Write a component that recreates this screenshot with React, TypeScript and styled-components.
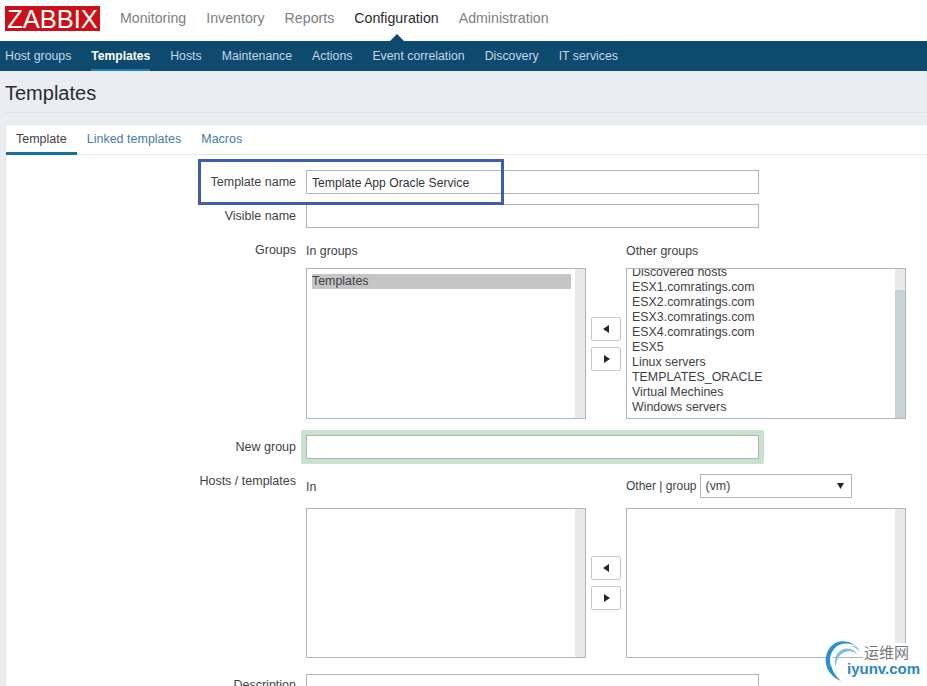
import React from "react";
import styled, { createGlobalStyle } from "styled-components";

const Global = createGlobalStyle`
  html, body { margin: 0; padding: 0; background: #ebeef0; }
  body { font-family: "Liberation Sans", Arial, sans-serif; font-size: 12.4px; color: #3f3f47; }
  #root { width: 927px; height: 686px; overflow: hidden; position: relative; }
`;

const TopBar = styled.header`
  height: 41px; background: #fff; display: flex; align-items: center; padding-left: 5px; box-sizing: border-box;
`;
const Logo = styled.div`
  width: 95px; height: 25px; margin-top: -4px; background: #cc1018; color: #fff;
  font-size: 25.5px; line-height: 26px; text-align: center; white-space: nowrap;
`;
const TopNav = styled.nav`
  display: flex; gap: 20px; margin-left: 20px; margin-top: -5px;
`;
const TopItem = styled.span<{ $active?: boolean }>`
  position: relative; font-size: 14.2px; color: ${p => (p.$active ? "#2b2b2f" : "#7b7f84")};
  ${p => p.$active && `
    &::after {
      content: ""; position: absolute; left: 50%; bottom: -15px; margin-left: -7px;
      border-left: 7px solid transparent; border-right: 7px solid transparent; border-bottom: 7px solid #0e4a6e;
    }
  `}
`;
const SubBar = styled.nav`
  height: 30px; background: #0e4a6e; display: flex; gap: 20px; padding-left: 5px;
`;
const SubItem = styled.span<{ $active?: boolean }>`
  font-size: ${p => (p.$active ? "12.1px" : "12.3px")}; line-height: 30px; color: ${p => (p.$active ? "#fff" : "#c3d8e8")};
  font-weight: ${p => (p.$active ? "bold" : "normal")};
  height: 30px; box-sizing: border-box;
  ${p => p.$active && `border-bottom: 2px solid #1f7fb4;`}
`;
const TitleBar = styled.div`
  height: 41px; margin-left: 5px; border-bottom: 1px solid #dfe3e6;
`;
const Title = styled.h1`
  margin: 0; font-size: 20px; font-weight: normal; line-height: 44px; color: #2b2b30;
`;
const Panel = styled.main`
  margin: 11px 0 0 5px; background: #fff; height: 600px; border-left: 1px solid #e4e8ea; border-top: 1px solid #e4e8ea;
`;
const Tabs = styled.div`
  height: 30px; box-sizing: border-box; display: flex; border-bottom: 1px solid #e6e9eb;
`;
const Tab = styled.span<{ $active?: boolean }>`
  height: 30px; box-sizing: border-box; padding: 0 10px; line-height: 28px; font-size: 12.5px;
  color: ${p => (p.$active ? "#3f3f47" : "#4a7ba6")};
  ${p => p.$active && `border-bottom: 3px solid #17729f;`}
`;
const Form = styled.div`
  display: grid; grid-template-columns: 290px 1fr; column-gap: 10px; padding-top: 15px;
`;
const Label = styled.div<{ $top?: number }>`
  text-align: right; line-height: 15px; font-size: 12.5px; margin-top: ${p => p.$top ?? 5}px; white-space: nowrap;
`;
const Field = styled.div<{ $bottom?: number }>`
  margin-bottom: ${p => p.$bottom ?? 10}px;
`;
const TextBox = styled.div`
  width: 453px; height: 24px; box-sizing: border-box; border: 1px solid #aeb6ba; background: #fff;
  padding-left: 5px; line-height: 24px; font-size: 12.2px; color: #33333a;
`;
const DescBox = styled(TextBox)`
  height: 60px;
`;
const Highlight = styled.div`
  width: 463px; box-sizing: border-box; padding: 5px; background: #c9e2cb; margin-left: -5px; border-radius: 2px;
`;
const Dual = styled.div`
  display: grid; grid-template-columns: 280px 40px 280px;
`;
const ColHead = styled.div<{ $h: number; $pb: number }>`
  height: ${p => p.$h}px; padding-bottom: ${p => p.$pb}px; box-sizing: border-box;
  line-height: 15px; display: flex; align-items: center; white-space: nowrap;
`;
const ListBox = styled.div<{ $h: number }>`
  position: relative; height: ${p => p.$h}px; box-sizing: border-box; border: 1px solid #aeb6ba; overflow: hidden; background: #fff;
  padding: 5px 14px 0 5px; line-height: 15px;
`;
const Scrolled = styled.div`
  margin-top: -9px;
`;
const Item = styled.div<{ $selected?: boolean }>`
  height: 15px; white-space: nowrap; background: ${p => (p.$selected ? "#c5c5c5" : "transparent")};
`;
const Track = styled.div`
  position: absolute; top: 0; right: 0; bottom: 0; width: 10px; background: #e9e9e9;
`;
const Thumb = styled.div`
  position: absolute; top: 21px; right: 0; bottom: 0; width: 10px; background: #c8d3d8;
`;
const Arrows = styled.div`
  display: flex; flex-direction: column; align-items: center; justify-content: center; gap: 6px;
`;
const ArrowBtn = styled.div`
  width: 30px; height: 24px; box-sizing: border-box; border: 1px solid #c3c9cc; border-radius: 2px;
  display: flex; align-items: center; justify-content: center; background: #fff;
`;
const GroupPick = styled.div`
  display: flex; align-items: center; gap: 3px; font-size: 12px;
`;
const Select = styled.div`
  width: 152px; height: 24px; box-sizing: border-box; border: 1px solid #aeb6ba; padding: 0 7px 0 5px;
  display: flex; align-items: center; justify-content: space-between; line-height: 22px; font-size: 12.4px;
`;
const Outline = styled.div`
  position: absolute; left: 198px; top: 159px; width: 306px; height: 46px; box-sizing: border-box;
  border: 3px solid #3f5dab;
`;
const Watermark = styled.div`
  position: absolute; left: 824px; top: 639px; width: 103px; height: 47px;
`;
const WmSwirl = styled.svg`
  position: absolute; left: 0; top: 0;
`;
const WmCn = styled.span`
  position: absolute; left: 39px; top: 4px; padding: 0 1px; background: #fff;
  font-family: "Noto Sans CJK SC", sans-serif; font-size: 15px; line-height: 18px; color: #777; white-space: nowrap;
`;
const WmEn = styled.span`
  position: absolute; left: 23px; top: 21px; background: #fff;
  font-family: "Liberation Sans", sans-serif; font-weight: bold; font-size: 15px; line-height: 18px; color: #2a86c8; white-space: nowrap;
`;

const Arrow = ({ dir }: { dir: "l" | "r" }) => (
  <svg width="7" height="8" viewBox="0 0 7 8">
    <path d={dir === "l" ? "M6 0v8L0 4z" : "M1 0v8l6-4z"} fill="#25282b" />
  </svg>
);

const others = ["Discovered hosts", "ESX1.comratings.com", "ESX2.comratings.com", "ESX3.comratings.com", "ESX4.comratings.com", "ESX5", "Linux servers", "TEMPLATES_ORACLE", "Virtual Mechines", "Windows servers"];

export default function App() {
  return (
    <>
      <Global />
      <TopBar>
        <Logo>ZABBIX</Logo>
        <TopNav>
          <TopItem>Monitoring</TopItem>
          <TopItem>Inventory</TopItem>
          <TopItem>Reports</TopItem>
          <TopItem $active>Configuration</TopItem>
          <TopItem>Administration</TopItem>
        </TopNav>
      </TopBar>
      <SubBar>
        <SubItem>Host groups</SubItem>
        <SubItem $active>Templates</SubItem>
        <SubItem>Hosts</SubItem>
        <SubItem>Maintenance</SubItem>
        <SubItem>Actions</SubItem>
        <SubItem>Event correlation</SubItem>
        <SubItem>Discovery</SubItem>
        <SubItem>IT services</SubItem>
      </SubBar>
      <TitleBar><Title>Templates</Title></TitleBar>
      <Panel>
        <Tabs>
          <Tab $active>Template</Tab>
          <Tab>Linked templates</Tab>
          <Tab>Macros</Tab>
        </Tabs>
        <Form>
          <Label>Template name</Label>
          <Field><TextBox>Template App Oracle Service</TextBox></Field>
          <Label>Visible name</Label>
          <Field><TextBox /></Field>
          <Label $top={5}>Groups</Label>
          <Field $bottom={11}>
            <Dual>
              <ColHead $h={30} $pb={4}>In groups</ColHead>
              <div />
              <ColHead $h={30} $pb={4}>Other groups</ColHead>
              <ListBox $h={151}>
                <Item $selected>Templates</Item>
                <Track />
              </ListBox>
              <Arrows>
                <ArrowBtn><Arrow dir="l" /></ArrowBtn>
                <ArrowBtn><Arrow dir="r" /></ArrowBtn>
              </Arrows>
              <ListBox $h={151}>
                <Scrolled>{others.map(o => <Item key={o}>{o}</Item>)}</Scrolled>
                <Track /><Thumb />
              </ListBox>
            </Dual>
          </Field>
          <Label $top={10}>New group</Label>
          <Field><Highlight><TextBox /></Highlight></Field>
          <Label $top={0}>Hosts / templates</Label>
          <Field $bottom={16}>
            <Dual>
              <ColHead $h={34} $pb={8}>In</ColHead>
              <div />
              <ColHead $h={34} $pb={10}>
                <GroupPick>Other | group <Select>(vm)<svg width="7" height="6" viewBox="0 0 7 6"><path d="M0 0h7L3.5 6z" fill="#25282b" /></svg></Select></GroupPick>
              </ColHead>
              <ListBox $h={150}><Track /></ListBox>
              <Arrows>
                <ArrowBtn><Arrow dir="l" /></ArrowBtn>
                <ArrowBtn><Arrow dir="r" /></ArrowBtn>
              </Arrows>
              <ListBox $h={150}><Track /></ListBox>
            </Dual>
          </Field>
          <Label $top={4}>Description</Label>
          <Field><DescBox /></Field>
        </Form>
      </Panel>
      <Outline />
      <Watermark>
        <WmSwirl width="40" height="44" viewBox="0 0 40 44">
          <path d="M36 13C30 1 13-2 5 10C-2 21 2 36 17 42C8 34 4 24 9 14C15 4 29 3 36 13Z" fill="#2a8fd0" />
          <path d="M34 9C27 3 16 3 10 10C6 15 5 21 7 28C7 20 10 13 16 9C22 6 29 6 34 9Z" fill="#fff" />
          <path d="M33 15C28 8 19 8 14 14C11 18 10 23 12 28C12 22 14 17 19 14C24 11 29 12 33 15Z" fill="#7cc0e8" />
        </WmSwirl>
        <WmCn>运维网</WmCn>
        <WmEn>iyunv.com</WmEn>
      </Watermark>
    </>
  );
}
